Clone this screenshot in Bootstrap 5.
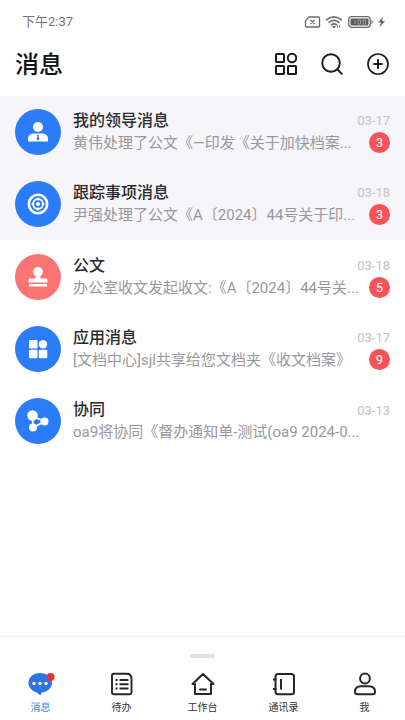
<!DOCTYPE html>
<html lang="zh-CN">
<head>
<meta charset="utf-8">
<meta name="viewport" content="width=device-width, initial-scale=1">
<title>消息</title>
<link href="https://cdn.jsdelivr.net/npm/bootstrap@5.3.0/dist/css/bootstrap.min.css" rel="stylesheet">
<style>
  body { font-family: Roboto, "Noto Sans CJK SC", sans-serif; background: #fefefe; color: #222; }
  svg { display: block; }
  .status-bar { height: 44px; padding: 0 20px 0 22px; color: #777; font-size: 13px; }
  .page-head { height: 52px; padding: 0 16px 12px 15px; }
  .page-head h1 { font-size: 24px; line-height: 40px; padding-top: 2px; font-weight: 500; color: #111; }
  .icon-btn { padding: 0; border: 0; background: none; color: #1c1c1c; }
  .msg { height: 72px; padding: 0 15px; gap: 12px; color: inherit; background: #fefefe; }
  .msg.pinned { background: #f5f5fa; }
  .msg-group { padding-top: 1px; }
  .avatar { width: 46px; height: 46px; background: #2a7cf8; color: #fff; }
  .avatar.coral { background: #fb7474; }
  .msg-body { min-width: 0; }
  .msg-title { font-size: 16px; line-height: 22px; font-weight: 500; color: #2a2a2e; }
  .msg-text { font-size: 15px; line-height: 22px; color: #98989c; }
  .msg-side { width: 34px; }
  .msg-date { font-size: 13px; line-height: 20px; color: #c3c3c8; }
  .count { width: 21px; height: 21px; font-size: 13px; line-height: 21px; background: #fb5257; color: #fff; }
  .msg-side .msg-date + .count { margin-top: 1px; }
  .tab-wrap { border-top: 1px solid #f3f3f3; }
  .handle { width: 25px; height: 4px; margin: 17px auto 13px; background: #e2e2e2; }
  .tab { padding: 0 0 4px; font-size: 10px; line-height: 16px; color: #333; gap: 3px; }
  .tab.current { color: #3d83dc; }
</style>
<script src="https://cdn.jsdelivr.net/npm/bootstrap@5.3.0/dist/js/bootstrap.bundle.min.js"></script>
</head>
<body class="d-flex flex-column min-vh-100">
<div class="status-bar d-flex align-items-center justify-content-between">
  <span>下午2:37</span>
  <div class="d-flex align-items-center gap-1">
    <svg width="17" height="14" viewBox="0 0 17 14" fill="none" stroke="#6c6c6c" stroke-width="1.3"><path d="M5 2h9.500q1 0 1 1v8q0 1-1 1h-12q-1 0-1-1V5.500zM6.500 5l4 4M10.500 5l-4 4"/></svg>
    <svg width="18" height="14" viewBox="0 0 18 14" fill="none" stroke="#6c6c6c" stroke-width="1.600"><path d="M1 5.200q8-6.800 16 0M3.500 7.700q5.500-4.700 11 0M6 10.200q3-2.500 6 0"/><path d="M7.500 11.500L9 13l1.500-1.500zM12.500 12.500v-2M14.500 10.500v2" stroke-width="1"/></svg>
    <svg width="27" height="14" viewBox="0 0 27 14"><rect x="1.700" y="1.700" width="21.600" height="10.600" rx="3" fill="none" stroke="#6c6c6c" stroke-width="1.300"/><rect x="3.500" y="3.500" width="18" height="7" rx="1" fill="#5e5e5e"/><path d="M24.500 5v4q1.500-.5 1.500-2t-1.500-2z" fill="#6c6c6c"/><path d="M8 5v4M11 5h2.500v4H11zM16 5h2.500v4H16z" fill="none" stroke="#aaa" stroke-width=".8"/></svg>
    <svg width="7" height="12" viewBox="0 0 7 12" fill="#666"><path d="M5 1L0 6.500h3L1.500 11.500 7 5H4z"/></svg>
  </div>
</div>
<header class="page-head d-flex align-items-center justify-content-between">
  <h1 class="m-0">消息</h1>
  <div class="d-flex align-items-center gap-4">
    <button class="icon-btn" type="button" aria-label="应用"><svg width="22" height="22" viewBox="0 0 22 22" fill="none" stroke="currentColor" stroke-width="2"><rect x="1" y="1" width="8" height="8" rx=".5"/><circle cx="17" cy="5" r="4.200"/><rect x="1" y="13" width="8" height="8" rx=".5"/><rect x="13" y="13" width="8" height="8" rx=".5"/></svg></button>
    <button class="icon-btn" type="button" aria-label="搜索"><svg width="22" height="22" viewBox="0 0 22 22" fill="none" stroke="currentColor" stroke-width="1.900"><circle cx="10" cy="10" r="8.800"/><path d="M16 16l5.300 5.300"/></svg></button>
    <button class="icon-btn" type="button" aria-label="新建"><svg width="22" height="22" viewBox="0 0 22 22" fill="none" stroke="currentColor" stroke-width="1.700"><circle cx="11" cy="11" r="10"/><path d="M11 6.300v9.400M6.300 11h9.400" stroke-width="2"/></svg></button>
  </div>
</header>
<main class="flex-grow-1">
  <a href="#" class="msg pinned d-flex align-items-center text-decoration-none">
    <span class="avatar rounded-circle d-flex align-items-center justify-content-center flex-shrink-0"><svg width="22" height="22" viewBox="0 0 22 22" fill="currentColor"><circle cx="11" cy="6" r="5"/><path d="M1 20.500V18q0-5 5.500-5.500h9Q21 13 21 18v2.500z"/><path d="M10 14h2l-.4 1.500.9 2.500-1.500 1.500L9.500 18l.9-2.500z" fill="#2a7cf8"/></svg></span>
    <span class="msg-body flex-grow-1 text-nowrap"><span class="msg-title d-block">我的领导消息</span><span class="msg-text d-block">黄伟处理了公文《—印发《关于加快档案...</span></span>
    <span class="msg-side d-flex flex-column align-items-end flex-shrink-0"><span class="msg-date text-nowrap">03-17</span><span class="count rounded-circle text-center">3</span></span>
  </a>
  <a href="#" class="msg pinned d-flex align-items-center text-decoration-none">
    <span class="avatar rounded-circle d-flex align-items-center justify-content-center flex-shrink-0"><svg width="22" height="22" viewBox="0 0 22 22" fill="none" stroke="currentColor"><circle cx="11" cy="11" r="9.200" stroke-width="2.600"/><circle cx="11" cy="11" r="5" stroke-width="1.800"/><circle cx="11" cy="11" r="2" fill="currentColor" stroke="none"/><path d="M11 4.500v3M11 14.500v3M4.500 11h3M14.500 11h3" stroke-width="1.400"/></svg></span>
    <span class="msg-body flex-grow-1 text-nowrap"><span class="msg-title d-block">跟踪事项消息</span><span class="msg-text d-block">尹强处理了公文《A〔2024〕44号关于印...</span></span>
    <span class="msg-side d-flex flex-column align-items-end flex-shrink-0"><span class="msg-date text-nowrap">03-18</span><span class="count rounded-circle text-center">3</span></span>
  </a>
  <div class="msg-group">
  <a href="#" class="msg d-flex align-items-center text-decoration-none">
    <span class="avatar coral rounded-circle d-flex align-items-center justify-content-center flex-shrink-0"><svg width="20" height="20" viewBox="0 0 20 20" fill="currentColor"><path d="M7.500 11.500V9Q5 7.500 5 5a5 5 0 0 1 10 0q0 2.500-2.500 4v2.500H18q1.500 0 1.500 1.500v2.500H.5V13q0-1.500 1.500-1.500zM1 17h18v2.500H1z"/></svg></span>
    <span class="msg-body flex-grow-1 text-nowrap"><span class="msg-title d-block">公文</span><span class="msg-text d-block">办公室收文发起收文:《A〔2024〕44号关...</span></span>
    <span class="msg-side d-flex flex-column align-items-end flex-shrink-0"><span class="msg-date text-nowrap">03-18</span><span class="count rounded-circle text-center">5</span></span>
  </a>
  <a href="#" class="msg d-flex align-items-center text-decoration-none">
    <span class="avatar rounded-circle d-flex align-items-center justify-content-center flex-shrink-0"><svg width="20" height="20" viewBox="0 0 20 20" fill="currentColor"><rect x="1" y="1" width="8.500" height="8.500" rx="1"/><circle cx="15" cy="5.200" r="4.200"/><rect x="1" y="10.800" width="8.500" height="8.500" rx="1"/><rect x="10.800" y="10.800" width="8.500" height="8.500" rx="1"/></svg></span>
    <span class="msg-body flex-grow-1 text-nowrap"><span class="msg-title d-block">应用消息</span><span class="msg-text d-block">[文档中心]sjl共享给您文档夹《收文档案》</span></span>
    <span class="msg-side d-flex flex-column align-items-end flex-shrink-0"><span class="msg-date text-nowrap">03-17</span><span class="count rounded-circle text-center">9</span></span>
  </a>
  <a href="#" class="msg d-flex align-items-center text-decoration-none">
    <span class="avatar rounded-circle d-flex align-items-center justify-content-center flex-shrink-0"><svg width="22" height="22" viewBox="0 0 22 22" fill="currentColor"><path d="M5.500 6l.5 11.500L17.500 11.500z" fill="none" stroke="currentColor" stroke-width="1.800"/><circle cx="5.500" cy="5.500" r="5.300"/><circle cx="17.500" cy="11.500" r="4"/><circle cx="6" cy="17.500" r="4"/></svg></span>
    <span class="msg-body flex-grow-1 text-nowrap"><span class="msg-title d-block">协同</span><span class="msg-text d-block">oa9将协同《督办通知单-测试(oa9 2024-0...</span></span>
    <span class="msg-side d-flex flex-column align-items-end flex-shrink-0 align-self-start pt-3"><span class="msg-date text-nowrap">03-13</span></span>
  </a>
  </div>
</main>
<footer class="tab-wrap">
  <div class="handle rounded-pill"></div>
  <nav class="d-flex">
    <a href="#" class="tab current d-flex flex-column align-items-center text-decoration-none col" aria-current="page"><svg width="28" height="26" viewBox="0 0 28 26"><path d="M13 2C6 2 1.500 6.500 1.500 12c0 4.500 3.500 8 8 9.200L13.500 24.500l1.200-3C20.500 21 25 17 25 12S20 2 13 2z" fill="#2a75e6"/><g fill="#fff"><circle cx="7" cy="12.500" r="1.700"/><circle cx="13" cy="12.500" r="1.700"/><circle cx="19" cy="12.500" r="1.700"/></g><circle cx="23.500" cy="6" r="4" fill="#e8303a"/></svg>消息</a>
    <a href="#" class="tab d-flex flex-column align-items-center text-decoration-none col"><svg width="28" height="26" viewBox="0 0 28 26" fill="none" stroke="#262626" stroke-width="1.900"><path d="M5.500 2.800h13q5 0 5 5v14q0 1.500-1.500 1.500H5.500Q4 23.300 4 21.800V4.300q0-1.500 1.500-1.500z"/><path d="M7.500 9h2M7.500 13.200h2M7.500 17.500h2M11.500 9h9M11.500 13.200h9M11.500 17.500h9"/></svg>待办</a>
    <a href="#" class="tab d-flex flex-column align-items-center text-decoration-none col"><svg width="28" height="26" viewBox="0 0 28 26" fill="none" stroke="#262626" stroke-width="2" stroke-linejoin="round" stroke-linecap="round"><path d="M6 13H3.500L14 3l10.500 10H22v10H6zM11 18.500h6"/></svg>工作台</a>
    <a href="#" class="tab d-flex flex-column align-items-center text-decoration-none col"><svg width="28" height="26" viewBox="0 0 28 26" fill="none" stroke="#262626" stroke-width="2"><rect x="5.500" y="3" width="18.500" height="20.300" rx="2.500"/><path d="M3 8.500h3.500M3 18h3.500M11 8v10.500"/></svg>通讯录</a>
    <a href="#" class="tab d-flex flex-column align-items-center text-decoration-none col"><svg width="28" height="26" viewBox="0 0 28 26" fill="none" stroke="#262626" stroke-width="2"><circle cx="14" cy="7.500" r="4.900"/><path d="M10 15.300h8q6 0 6 5.500 0 2.500-2.500 2.500h-15Q4 23.300 4 20.800q0-5.500 6-5.500z"/></svg>我</a>
  </nav>
</footer>
</body>
</html>
